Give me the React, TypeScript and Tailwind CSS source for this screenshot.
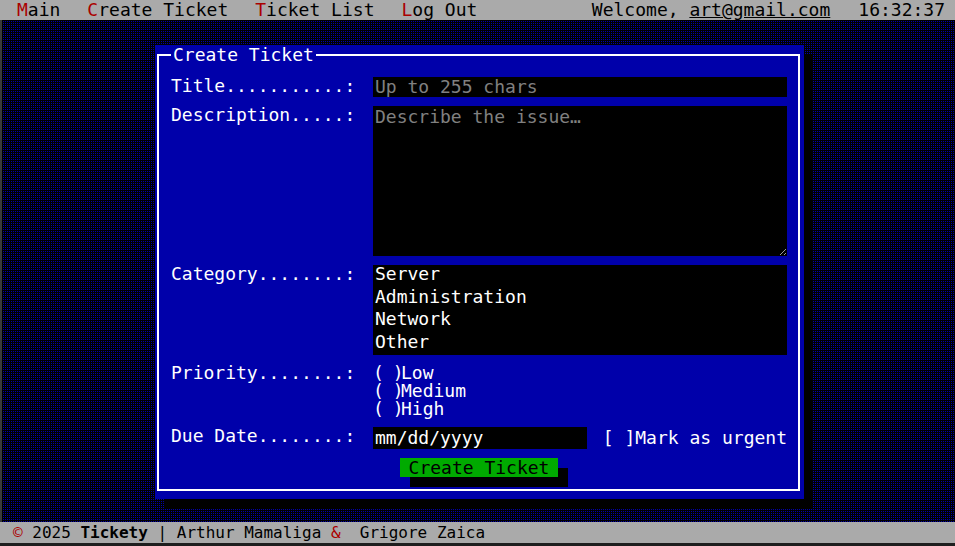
const navItems = ["Main", "Create Ticket", "Ticket List", "Log Out"];
const categories = ["Server", "Administration", "Network", "Other"];
const priorities = ["Low", "Medium", "High"];

const App = () => {
    return (
        <div className="flex h-screen min-h-[546px] flex-col bg-black font-['DejaVu_Sans_Mono',monospace] text-[18px]">
            <header className="flex h-[20px] shrink-0 items-center justify-between bg-[#aaaaaa] leading-[20px] text-black">
                <nav className="flex gap-[27px] pl-[17px]">
                    {navItems.map((item) => (
                        <a key={item} className="cursor-pointer">
                            <span className="text-[#aa0000]">{item[0]}</span>
                            {item.slice(1)}
                        </a>
                    ))}
                </nav>
                <div className="flex gap-[28px] pr-[10px]">
                    <span>
                        Welcome, <span className="underline">art@gmail.com</span>
                    </span>
                    <span>16:32:37</span>
                </div>
            </header>

            {/* dotted backdrop: one blue pixel (bottom-right) in every 2x2 cell */}
            <main className="flex flex-1 justify-center border-l-2 border-[#3a3a3a] bg-black [background-image:conic-gradient(from_90deg_at_1px_1px,#0000aa_25%,#000000_25%)] [background-size:2px_2px] pl-[2px] pt-[25px]">
                <div className="h-fit w-[649px] bg-[#0000aa] pb-[8px] pl-[2px] pr-[4px] pt-[1px] shadow-[9px_9px_0_#000]">
                    <fieldset className="border-2 border-white pb-[12px] pl-[12px] pr-[11px] pt-[13px] text-white">
                        <legend className="px-[2px] leading-[18px]">Create Ticket</legend>

                        <div className="grid grid-cols-[202px_1fr] gap-y-[9px]">
                            <label className="leading-[18px]">Title...........:</label>
                            <input
                                type="text"
                                placeholder="Up to 255 chars"
                                className="h-[20px] w-full bg-black px-[2px] leading-[20px] text-white outline-none placeholder:text-[#808080]"
                            />

                            <label className="leading-[18px]">Description.....:</label>
                            <textarea
                                placeholder="Describe the issue…"
                                className="h-[150px] w-full resize-y bg-black px-[2px] pt-[1px] leading-[20px] text-white outline-none placeholder:text-[#808080]"
                            ></textarea>

                            <label className="leading-[18px]">Category........:</label>
                            <div className="h-[90px] w-full bg-black px-[2px]">
                                {categories.map((c) => (
                                    <div key={c} className="pb-[4.5px] leading-[18px]">
                                        {c}
                                    </div>
                                ))}
                            </div>

                            <label className="leading-[18px]">Priority........:</label>
                            <div className="flex flex-col">
                                {priorities.map((p) => (
                                    <div key={p} className="flex h-[18px] leading-[18px]">
                                        <span className="w-[28px] shrink-0 tracking-[-1px] whitespace-pre">( )</span>
                                        <span>{p}</span>
                                    </div>
                                ))}
                            </div>

                            <label className="leading-[18px]">Due Date........:</label>
                            <div className="flex items-start justify-between">
                                <div className="h-[22px] w-[214px] bg-black pl-[2px] leading-[22px]">mm/dd/yyyy</div>
                                <span className="leading-[22px] whitespace-pre">[ ]Mark as urgent</span>
                            </div>

                            <button
                                type="submit"
                                className="col-span-2 h-[19px] justify-self-center bg-[#00aa00] px-[9px] leading-[19px] text-black shadow-[10px_10px_0_#000]"
                            >
                                Create Ticket
                            </button>
                        </div>
                    </fieldset>
                </div>
            </main>

            <footer className="h-[21px] shrink-0 bg-[#aaaaaa] pl-[13px] text-[16px] leading-[21px] whitespace-pre text-black">
                <span className="text-[#aa0000]">©</span> 2025 <b>Tickety</b> | Arthur Mamaliga <span className="text-[#aa0000]">&amp;</span>  Grigore Zaica
            </footer>
            <div className="h-[3px] shrink-0 bg-[#1e1e1e]"></div>
        </div>
    );
};

export default App;
